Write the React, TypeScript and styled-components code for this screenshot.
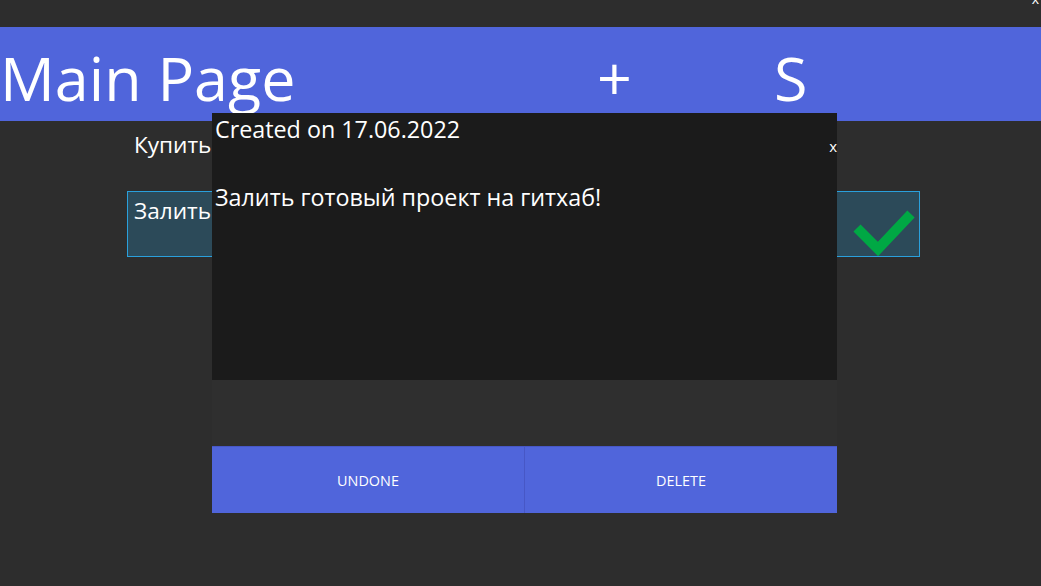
import React from "react";
import styled, { createGlobalStyle } from "styled-components";

const GlobalStyle = createGlobalStyle`
  html, body { margin: 0; padding: 0; }
  body {
    background: #2d2d2d;
    font-family: "Open Sans", "Noto Sans", sans-serif;
    color: #ffffff;
    overflow: hidden;
  }
`;

const Window = styled.div`
  position: relative;
  width: 1041px;
  height: 586px;
  display: flex;
  flex-direction: column;
  background: #2d2d2d;
`;

const TitleBar = styled.div`
  height: 27px;
  display: flex;
  justify-content: flex-end;
  align-items: flex-start;
  overflow: hidden;
`;

const CloseGlyph = styled.span`
  font-size: 14px;
  line-height: 14px;
  margin-top: -8px;
  margin-right: 2px;
  color: #ffffff;
`;

const Header = styled.header`
  height: 94px;
  box-sizing: border-box;
  padding-top: 8px;
  background: #5065db;
  display: flex;
  align-items: center;
  font-size: 61px;
  line-height: 86px;
  color: #ffffff;
`;

const HeaderTitle = styled.div`
  width: 597px;
  padding-left: 0;
`;

const HeaderButton = styled.div<{ $width: number }>`
  width: ${(p) => p.$width}px;
`;

const List = styled.div`
  padding: 4px 0 0 127px;
  display: flex;
  flex-direction: column;
`;

const Row = styled.div<{ $selected?: boolean }>`
  width: 793px;
  height: 66px;
  box-sizing: border-box;
  display: flex;
  justify-content: space-between;
  align-items: flex-start;
  padding: 4px 0 0 6px;
  border: 1px solid ${(p) => (p.$selected ? "#2aa0dc" : "transparent")};
  background: ${(p) => (p.$selected ? "#2c4a59" : "transparent")};
  font-size: 22.6px;
  line-height: 30px;
`;

const Check = styled.svg`
  width: 70px;
  height: 64px;
  flex: none;
  margin-top: -4px;
`;

const Modal = styled.div`
  position: absolute;
  left: 212px;
  top: 113px;
  width: 625px;
  height: 400px;
  display: flex;
  flex-direction: column;
  background: #2f2f2f;
`;

const Card = styled.div`
  position: relative;
  height: 267px;
  background: #1b1b1b;
  padding: 1px 0 0 3px;
  box-sizing: border-box;
  font-size: 23.3px;
  line-height: 30px;
`;

const CardClose = styled.span`
  position: absolute;
  right: 0;
  top: 23px;
  font-size: 15px;
  line-height: 20px;
`;

const Description = styled.div`
  margin-top: 38px;
`;

const Spacer = styled.div`
  flex: 1;
`;

const ButtonBar = styled.div`
  height: 67px;
  display: grid;
  grid-template-columns: 312px 1px 312px;
  border-top: 1px solid #4757c6;
  box-sizing: border-box;
`;

const Divider = styled.div`
  background: #4757c6;
`;

const ActionButton = styled.button`
  border: none;
  margin: 0;
  padding: 0;
  background: #5065db;
  color: #ffffff;
  font-family: "Open Sans", "Noto Sans", sans-serif;
  font-size: 14.4px;
  cursor: pointer;
`;

export default function App() {
  return (
    <>
      <GlobalStyle />
      <Window>
        <TitleBar>
          <CloseGlyph>x</CloseGlyph>
        </TitleBar>
        <Header>
          <HeaderTitle>Main Page</HeaderTitle>
          <HeaderButton $width={177}>+</HeaderButton>
          <HeaderButton $width={60}>S</HeaderButton>
        </Header>
        <List>
          <Row>
            <span>Купить</span>
          </Row>
          <Row $selected>
            <span>Залить</span>
            <Check viewBox="0 0 70 64">
              <polyline
                points="8,36 29,57 62,22"
                fill="none"
                stroke="#00a844"
                strokeWidth="10"
              />
            </Check>
          </Row>
        </List>
        <Modal>
          <Card>
            <div>Created on 17.06.2022</div>
            <CardClose>x</CardClose>
            <Description>Залить готовый проект на гитхаб!</Description>
          </Card>
          <Spacer />
          <ButtonBar>
            <ActionButton>UNDONE</ActionButton>
            <Divider />
            <ActionButton>DELETE</ActionButton>
          </ButtonBar>
        </Modal>
      </Window>
    </>
  );
}
